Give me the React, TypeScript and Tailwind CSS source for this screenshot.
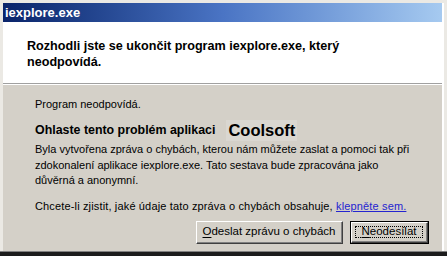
import React from 'react';

const font = { fontFamily: '"Liberation Sans", Arial, sans-serif' };

const Button: React.FC<{ label: string; hot: string; isDefault?: boolean; className?: string }> = ({ label, hot, isDefault, className }) => {
  const rest = label.slice(hot.length);
  const bevel = (
    <div className="h-full border-t border-l border-t-white border-l-white border-r border-b border-r-[#404040] border-b-[#404040]">
      <div className="h-full border-r border-b border-r-[#808080] border-b-[#808080] flex items-center justify-center p-[3px]">
        <span className={isDefault ? 'h-full w-full flex items-center justify-center border border-dotted border-black' : 'flex items-center justify-center'}>
          <span className="underline underline-offset-[1.5px]">{hot}</span>
          {rest}
        </span>
      </div>
    </div>
  );
  return (
    <button className={`h-[23px] bg-[#d4d0c8] text-[11.5px] text-black leading-none ${isDefault ? 'border border-black' : ''} ${className ?? ''}`}>
      {bevel}
    </button>
  );
};

export default function App() {
  return (
    <div className="w-[447px] h-[256px] bg-[#ebe9e4] flex flex-col overflow-hidden" style={font}>
      <div className="flex-1 flex flex-col pl-[3px] pt-[3px] pr-[3px]">
        <div className="flex-1 flex flex-col border-r-2 border-r-white">
          {/* title bar */}
          <div className="h-[19px] bg-gradient-to-r from-[#0a246a] via-[#4a74c4] to-[#a6caf0] flex items-center pl-[2px]">
            <span className="text-white font-bold text-[13px] leading-none">iexplore.exe</span>
          </div>

          {/* white header */}
          <div className="h-[61px] bg-white pl-[24px] pt-[16px]">
            <p className="text-[12.6px] font-bold leading-[16px] text-black">
              Rozhodli jste se ukončit program iexplore.exe, který
              <br />
              neodpovídá.
            </p>
          </div>
          <div className="h-px bg-[#a0a0a0]" />
          <div className="h-px bg-white" />

          {/* body */}
          <div className="flex-1 bg-[#d4d0c8] pl-[32px] pr-[8px] text-[11px] text-black leading-[15px]">
            <p className="mt-[12px]">Program neodpovídá.</p>
            <div className="mt-[8px] h-[21px] flex items-center">
              <span className="font-bold text-[12.4px]">Ohlaste tento problém aplikaci</span>
              <span className="ml-[11px] px-[2px] bg-[#dad7d1] font-bold text-[16.5px] leading-[21px] text-black">Coolsoft</span>
            </div>
            <p className="mt-[1px] leading-[15.5px]">
              Byla vytvořena zpráva o chybách, kterou nám můžete zaslat a pomoci tak při
              <br />
              zdokonalení aplikace iexplore.exe. Tato sestava bude zpracována jako
              <br />
              důvěrná a anonymní.
            </p>
            <p className="mt-[10px] tracking-[0.15px] whitespace-nowrap">
              Chcete-li zjistit, jaké údaje tato zpráva o chybách obsahuje,{' '}
              <span className="text-[#2424d0] underline">klepněte sem.</span>
            </p>
            <div className="mt-[7px] flex justify-end gap-[7px] pr-[5px]">
              <Button label="Odeslat zprávu o chybách" hot="O" className="w-[147px]" />
              <Button label="Neodesílat" hot="N" isDefault className="w-[79px]" />
            </div>
          </div>
        </div>
      </div>
      <div className="h-px bg-[#808080]" />
      <div className="h-[4px] bg-[#1c1c1c]" />
    </div>
  );
}
